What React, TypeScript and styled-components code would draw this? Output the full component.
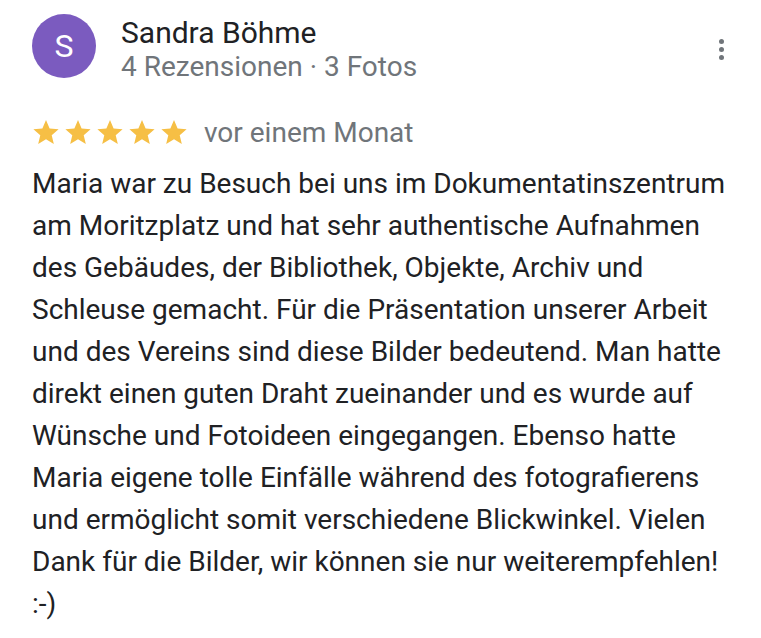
import React from "react";
import styled, { createGlobalStyle } from "styled-components";

const Global = createGlobalStyle`
  html, body { margin: 0; padding: 0; background: #ffffff; }
  body { font-family: Roboto, "Noto Sans", Arial, sans-serif; -webkit-font-smoothing: antialiased; }
`;

const Card = styled.div`
  width: 761px;
  height: 638px;
  box-sizing: border-box;
  padding: 14px 0 0 32px;
  background: #fff;
  position: relative;
  overflow: hidden;
`;

const Header = styled.div`
  display: flex;
  align-items: flex-start;
  gap: 25px;
`;

const Avatar = styled.div`
  width: 64px;
  height: 64px;
  border-radius: 50%;
  background: #7b5bbf;
  color: #fff;
  display: flex;
  align-items: center;
  justify-content: center;
  font-size: 32px;
  font-weight: 400;
`;

const Who = styled.div`
  display: flex;
  flex-direction: column;
  margin-top: 2px;
`;

const Name = styled.div`
  font-size: 30px;
  line-height: 34px;
  color: #202124;
`;

const Meta = styled.div`
  font-size: 28px;
  line-height: 34px;
  color: #70757a;
`;

const MoreButton = styled.div`
  position: absolute;
  top: 39px;
  right: 37px;
  display: flex;
  flex-direction: column;
  gap: 3px;
`;

const Dot = styled.span`
  width: 5px;
  height: 5px;
  border-radius: 50%;
  background: #70757a;
`;

const RatingRow = styled.div`
  display: flex;
  align-items: center;
  margin-top: 34px;
  gap: 16px;
  height: 28px;
`;

const Stars = styled.div`
  display: flex;
  gap: 4px;
`;

const When = styled.span`
  font-size: 28px;
  color: #70757a;
`;

const Body = styled.div`
  margin-top: 17px;
  font-size: 28px;
  line-height: 42px;
  color: #202124;
`;

const Line = styled.span`
  display: block;
  white-space: nowrap;
`;

const Star = () => (
  <svg width="28" height="28" viewBox="0 0 24 24">
    <path
      fill="#f6bf45"
      d="M12 1.8l3.1 7.2 7.7.6-5.9 5.1 1.8 7.6L12 18.3 5.3 22.3l1.8-7.6L1.2 9.6l7.7-.6z"
    />
  </svg>
);

const lines = [
  "Maria war zu Besuch bei uns im Dokumentatinszentrum",
  "am Moritzplatz und hat sehr authentische Aufnahmen",
  "des Gebäudes, der Bibliothek, Objekte, Archiv und",
  "Schleuse gemacht. Für die Präsentation unserer Arbeit",
  "und des Vereins sind diese Bilder bedeutend. Man hatte",
  "direkt einen guten Draht zueinander und es wurde auf",
  "Wünsche und Fotoideen eingegangen. Ebenso hatte",
  "Maria eigene tolle Einfälle während des fotografierens",
  "und ermöglicht somit verschiedene Blickwinkel. Vielen",
  "Dank für die Bilder, wir können sie nur weiterempfehlen!",
  ":-)",
];

export default function App() {
  return (
    <>
      <Global />
      <Card>
        <Header>
          <Avatar>S</Avatar>
          <Who>
            <Name>Sandra Böhme</Name>
            <Meta>4 Rezensionen · 3 Fotos</Meta>
          </Who>
        </Header>
        <MoreButton>
          <Dot />
          <Dot />
          <Dot />
        </MoreButton>
        <RatingRow>
          <Stars>
            {[0, 1, 2, 3, 4].map((i) => (
              <Star key={i} />
            ))}
          </Stars>
          <When>vor einem Monat</When>
        </RatingRow>
        <Body>
          {lines.map((l, i) => (
            <Line key={i}>{l}</Line>
          ))}
        </Body>
      </Card>
    </>
  );
}
